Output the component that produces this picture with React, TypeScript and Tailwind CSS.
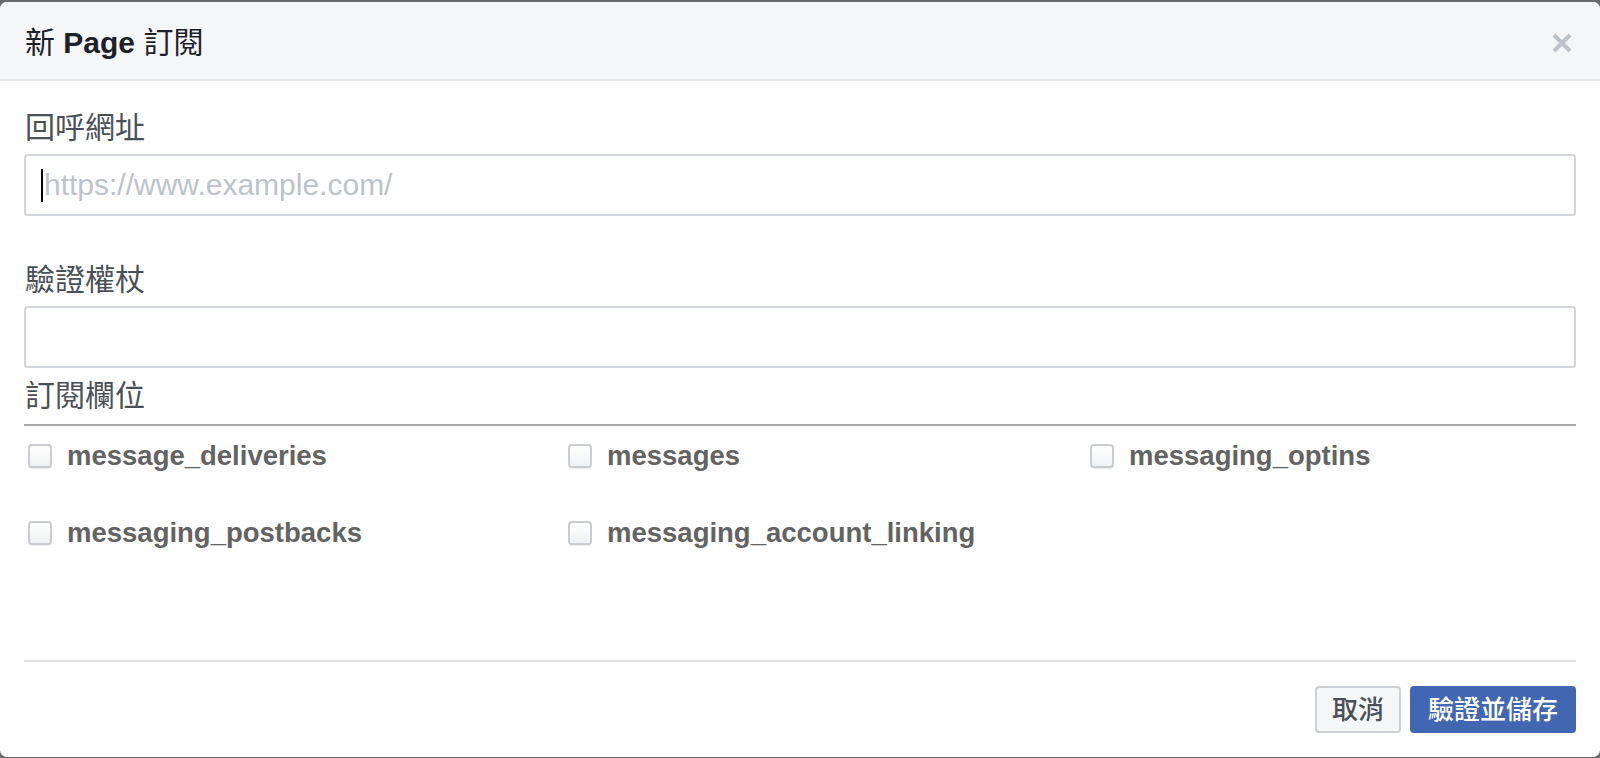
import React from "react";

const FONT = { fontFamily: '"Liberation Sans", "Noto Sans CJK TC", sans-serif' };

function Checkbox({ label }: { label: string }) {
  return (
    <label className="flex items-center h-[36px] cursor-pointer">
      <span className="w-[24px] h-[24px] rounded-[4px] border-2 border-[#c9ccd1] bg-gradient-to-b from-white to-[#f1f2f3] shadow-[0_1px_0_rgba(0,0,0,0.07)] shrink-0" />
      <span className="ml-[15px] text-[27.5px] font-bold text-[#636363] leading-[36px]">{label}</span>
    </label>
  );
}

export default function App() {
  return (
    <div className="w-[1600px] h-[758px] bg-[#6a6a6a] pt-[2px] overflow-hidden" style={FONT}>
      <div className="bg-white rounded-[7px] h-[755px] flex flex-col overflow-hidden">
        {/* Header */}
        <div className="h-[79px] shrink-0 bg-[#f5f6f7] border-b-2 border-[#e5e5e5] flex items-center justify-between pl-[25px] pr-[28px] pt-[5px]">
          <div className="text-[30px] text-[#1d2129] leading-[36px] whitespace-pre">
            <span className="font-normal">新 </span>
            <span className="font-bold">Page</span>
            <span className="font-normal"> 訂閱</span>
          </div>
          <button className="w-[20px] h-[20px] flex items-center justify-center" aria-label="close">
            <svg width="20" height="20" viewBox="0 0 20 20">
              <path d="M2 2 L18 18 M18 2 L2 18" stroke="#bec3c9" strokeWidth="4" strokeLinecap="butt" />
            </svg>
          </button>
        </div>

        {/* Body */}
        <div className="flex-1 px-[24px] pt-[29px]">
          <div className="text-[30px] leading-[36px] text-[#4b4f56] pl-[1px]">回呼網址</div>
          <div className="relative mt-[8px]">
            <input
              className="w-full h-[62px] border-2 border-[#d3d6db] rounded-[4px] pl-[18px] text-[30px] text-[#1d2129] placeholder:text-[#bec3c9] outline-none bg-white"
              style={FONT}
              placeholder="https://www.example.com/"
              readOnly
            />
            <span className="absolute left-[17px] top-[15px] w-[2px] h-[33px] bg-black" />
          </div>

          <div className="mt-[46px] text-[30px] leading-[36px] text-[#4b4f56] pl-[1px]">驗證權杖</div>
          <input
            className="mt-[8px] block w-full h-[62px] border-2 border-[#d3d6db] rounded-[4px] pl-[18px] text-[30px] outline-none bg-white"
            style={FONT}
            readOnly
          />

          <div className="mt-[10px] text-[30px] leading-[36px] text-[#4b4f56] pl-[1px]">訂閱欄位</div>
          <div className="mt-[10px] h-[2px] bg-[#a9a9a9]" />

          <div className="mt-[12px] pl-[4px] grid grid-cols-[540px_522px_1fr] gap-y-[41px]">
            <Checkbox label="message_deliveries" />
            <Checkbox label="messages" />
            <Checkbox label="messaging_optins" />
            <Checkbox label="messaging_postbacks" />
            <Checkbox label="messaging_account_linking" />
          </div>
        </div>

        {/* Footer */}
        <div className="shrink-0 mx-[24px] border-t-2 border-[#dddfe2] pt-[24px] pb-[24px] flex justify-end gap-[9px]">
          <button className="h-[47px] px-[15px] rounded-[4px] border-2 border-[#ccd0d5] bg-[#f5f6f7] text-[26px] font-medium text-[#4b4f56] leading-none">
            取消
          </button>
          <button className="h-[47px] px-[16px] rounded-[4px] border-2 border-[#4267b2] bg-[#4267b2] text-[26px] font-medium text-white leading-none">
            驗證並儲存
          </button>
        </div>
      </div>
    </div>
  );
}
